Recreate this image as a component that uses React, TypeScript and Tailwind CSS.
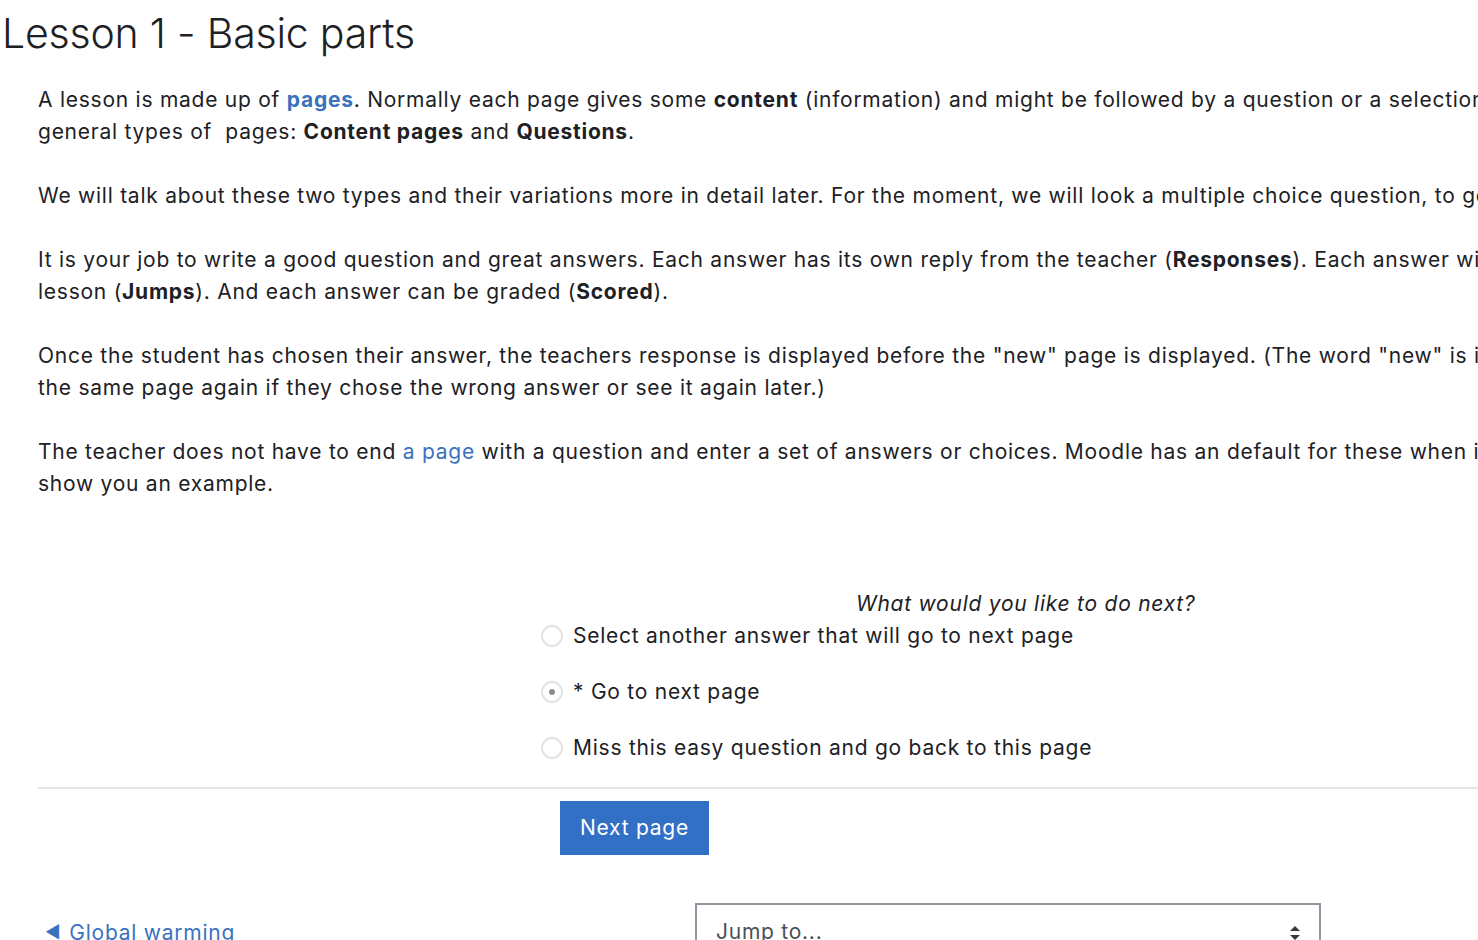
import React from 'react'

const Line = ({ children }: { children: React.ReactNode }) => (
  <div className="whitespace-pre leading-[32px]">{children}</div>
)

const Link = ({ children, bold }: { children: React.ReactNode; bold?: boolean }) => (
  <a className={`text-[#3a72c0] ${bold ? 'font-bold' : ''}`}>{children}</a>
)

function Radio({ checked, label }: { checked?: boolean; label: string }) {
  return (
    <label className="flex items-center h-[56px]">
      <span className="w-[22px] h-[22px] rounded-full border-2 border-[#e3e3e3] flex items-center justify-center">
        {checked && <span className="w-[6px] h-[6px] rounded-full bg-[#8d8d8d]" />}
      </span>
      <span className="ml-[10px]">{label}</span>
    </label>
  )
}

export default function App() {
  return (
    <div
      className="w-[1478px] h-[940px] overflow-hidden bg-white text-[#1d2125] text-[21px] tracking-[0.75px]"
      style={{ fontFamily: 'Inter, "Noto Sans", sans-serif' }}
    >
      {/* Title */}
      <h1 className="text-[41px] font-light leading-[50px] pl-[2px] pt-[8px] tracking-[-0.2px]">
        Lesson 1 - Basic parts
      </h1>

      {/* Content */}
      <div className="pl-[38px] pt-[26px] w-[2000px]">
        <div className="mb-[32px]">
          <Line>
            A lesson is made up of <Link bold>pages</Link>. Normally each page gives some{' '}
            <b className="font-bold">content</b> (information) and might be followed by a question or a selection of choices. There are two
          </Line>
          <Line>
            general types of  pages: <b className="font-bold">Content pages</b> and{' '}
            <b className="font-bold">Questions</b>.
          </Line>
        </div>
        <div className="mb-[32px]">
          <Line>
            We will talk about these two types and their variations more in detail later. For the moment, we will look a multiple choice question, to get started.
          </Line>
        </div>
        <div className="mb-[32px]">
          <Line>
            It is your job to write a good question and great answers. Each answer has its own reply from the teacher (
            <b className="font-bold">Responses</b>). Each answer will also send the student to a page in the
          </Line>
          <Line>
            lesson (<b className="font-bold">Jumps</b>). And each answer can be graded (
            <b className="font-bold">Scored</b>).
          </Line>
        </div>
        <div className="mb-[32px]">
          <Line>
            Once the student has chosen their answer, the teachers response is displayed before the "new" page is displayed. (The word "new" is in quotes as they might see
          </Line>
          <Line>the same page again if they chose the wrong answer or see it again later.)</Line>
        </div>
        <div>
          <Line>
            The teacher does not have to end <Link>a page</Link> with a question and enter a set of answers or choices. Moodle has an default for these when it is empty. We will
          </Line>
          <Line>show you an example.</Line>
        </div>
      </div>

      {/* Question */}
      <div className="mt-[88px] pl-[541px]">
        <div className="pl-[315px] italic leading-[32px]">What would you like to do next?</div>
        <div className="-mt-[12px]">
          <Radio label="Select another answer that will go to next page" />
          <Radio checked label="* Go to next page" />
          <Radio label="Miss this easy question and go back to this page" />
        </div>
      </div>

      <div className="ml-[38px] mt-[11px] border-t-2 border-[#e5e5e5]" />

      <div className="pl-[560px] pt-[12px]">
        <button className="bg-[#3170c5] text-white w-[149px] h-[54px] text-[21px] tracking-[0.75px]">Next page</button>
      </div>

      {/* Navigation */}
      <div className="flex items-start mt-[48px]">
        <div className="w-[695px] shrink-0 pl-[45px] pt-[12px]">
          <a className="text-[#3a72c0] inline-flex items-center">
            <span className="text-[17px] mr-[8px]">◀</span>
            <span>Global warming</span>
          </a>
        </div>
        <div className="w-[626px] h-[50px] border-2 border-[#8f959e] flex items-center justify-between pl-[19px] pr-[18px] text-[#495057]">
          <span className="mt-[8px]">Jump to...</span>
          <svg width="12" height="16" viewBox="0 0 12 16" className="mt-[10px]">
            <path d="M6 1 L11 6 H1 Z" fill="#343a40" />
            <path d="M6 15 L11 10 H1 Z" fill="#343a40" />
          </svg>
        </div>
      </div>
    </div>
  )
}
